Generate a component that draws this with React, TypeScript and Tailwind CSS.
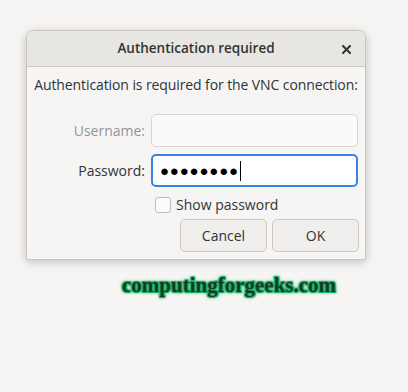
export default function App() {
  return (
    <div
      className="w-[408px] h-[392px] bg-[#f6f5f4] pl-[26px] pt-[30px]"
      style={{ fontFamily: '"Open Sans", "Noto Sans", sans-serif' }}
    >
      <div className="w-[340px] rounded-t-[8px] border border-[#c9c6c2] bg-[#f6f5f4] shadow-[0_2px_10px_rgba(0,0,0,0.22)]">
        <div className="relative flex h-[36px] items-center justify-center rounded-t-[8px] border-b border-[#cdc9c5] bg-[#e8e6e3]">
          <span className="text-[13.5px] font-semibold text-[#2e3436]">Authentication required</span>
          <svg className="absolute right-[14px] top-[14px]" width="9" height="9" viewBox="0 0 9 9">
            <path d="M1 1L8 8M8 1L1 8" stroke="#2e3436" strokeWidth="2" strokeLinecap="round" />
          </svg>
        </div>
        <div className="px-[6px] pb-[7px]">
          <div className="mt-[8px] h-[20px] text-center text-[14px] leading-[20px] text-[#2e3436] tracking-[-0.1px]">
            Authentication is required for the VNC connection:
          </div>
          <div className="mt-[19px] grid grid-cols-[112px_207px] gap-x-[6px] gap-y-[7px]">
            <div className="flex items-center justify-end text-[14px] text-[#929595]">Username:</div>
            <div className="h-[33px] rounded-[5px] border border-[#d8d4d0] bg-[#fafafa]" />
            <div className="flex items-center justify-end text-[14px] text-[#2e3436]">Password:</div>
            <div className="flex h-[33px] items-center rounded-[5px] border-2 border-[#3584e4] bg-white pl-[7px]">
              <span className="text-[15px] tracking-[0.8px] text-black leading-none">●●●●●●●●</span>
              <span className="ml-[1px] h-[20px] w-px bg-black" />
            </div>
          </div>
          <div className="mt-[7px] ml-[122px] flex items-center gap-[5px]">
            <div className="h-[16px] w-[16px] rounded-[3px] border border-[#c0bdb9] bg-[#fbfbfb]" />
            <span className="text-[14px] text-[#2e3436]">Show password</span>
          </div>
          <div className="mt-[4px] flex justify-end gap-[5px]">
            <button className="h-[33px] w-[87px] rounded-[5px] border border-[#cdc7c2] bg-[#f0efed] text-[14px] text-[#2e3436]">
              Cancel
            </button>
            <button className="h-[33px] w-[87px] rounded-[5px] border border-[#cdc7c2] bg-[#f0efed] text-[14px] text-[#2e3436]">
              OK
            </button>
          </div>
        </div>
      </div>
      <div className="mt-[10px] ml-[96px]">
        <span
          className="text-[21px] font-bold text-[#133d22]"
          style={{
            fontFamily: '"Liberation Serif", "DejaVu Serif", serif',
            textShadow:
              '0 0 2px #1fb06a, 1px 1px 1px #1fb06a, -1px -1px 1px #1fb06a, 1px -1px 1px #1fb06a, -1px 1px 1px #1fb06a, 0 0 4px #1fb06a',
          }}
        >
          computingforgeeks.com
        </span>
      </div>
    </div>
  );
}
